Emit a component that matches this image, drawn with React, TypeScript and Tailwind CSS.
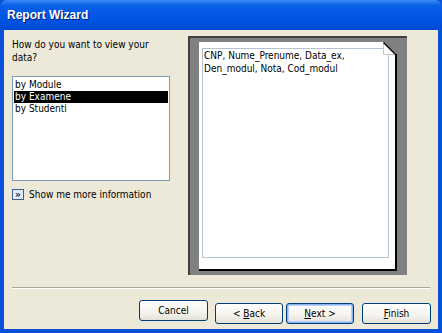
import React from 'react'

const font = { fontFamily: '"DejaVu Sans Condensed", "Liberation Sans", Arial, sans-serif' }

function WizButton({ children, isDefault, w }: { children: React.ReactNode; isDefault?: boolean; w: string }) {
  return (
    <button
      className={
        'h-[21px] rounded-[3px] border border-[#003c74] bg-[linear-gradient(#ffffff,#f4f3ee_60%,#e3e1d6)] text-[10px] text-black ' +
        w +
        (isDefault ? ' shadow-[inset_0_0_0_1px_#8cb4f2,inset_0_0_0_2px_#b9d1fa]' : '')
      }
    >
      {children}
    </button>
  )
}

export default function App() {
  return (
    <div className="w-[442px] h-[333px] flex flex-col bg-[#0a50d8] overflow-hidden" style={font}>
      {/* title bar */}
      <div className="h-[30px] shrink-0 flex items-center pl-[7px] rounded-t-[7px] bg-[linear-gradient(#3a8cf6,#0a5fe8_18%,#0055e5_60%,#0049d6)]">
        <span className="text-white font-bold text-[12px] [text-shadow:1px_1px_0_#0a1f70]" style={{ fontFamily: '"Liberation Sans", Arial, sans-serif' }}>
          Report Wizard
        </span>
      </div>

      {/* body */}
      <div className="flex-1 mx-[4px] mb-[4px] bg-[#ece9d8] flex flex-col">
        <div className="flex pt-[6px]">
          {/* left column */}
          <div className="w-[176px] pl-[8px] flex flex-col">
            <p className="text-[10px] leading-[13px] text-black mt-[2px] w-[150px]">How do you want to view your data?</p>
            <div className="mt-[12px] w-[158px] h-[105px] border border-[#7f9db9] bg-white px-[1px] pt-[2px] text-[10px] leading-[12px] text-black">
              <div className="pl-[1px]">by Module</div>
              <div className="pl-[1px] bg-black text-white">by Examene</div>
              <div className="pl-[1px]">by Studenti</div>
            </div>
            <div className="mt-[6px] flex items-center gap-[5px] text-[10px] text-black">
              <span className="w-[12px] h-[11px] border border-[#3d5f8f] bg-[#e4ecf7] flex items-center justify-center text-[10px] leading-none font-bold text-[#1d2f5e]">»</span>
              <span>Show me more information</span>
            </div>
          </div>

          {/* preview */}
          <div className="ml-[8px] w-[219px] h-[239px] bg-[#808080] border-t-2 border-l-2 border-[#404040] pl-[9px] pt-[4px]">
            <div className="relative w-[198px] h-[229px] bg-white border-r-2 border-b-2 border-black pl-[3px] pt-[6px]">
              <div className="w-[187px] h-[210px] border border-[#b4c3d6] px-[1px] text-[10px] leading-[13px] text-black">
                CNP, Nume_Prenume, Data_ex, Den_modul, Nota, Cod_modul
              </div>
              <svg className="absolute right-[-2px] top-0" width="14" height="14" viewBox="0 0 14 14">
                <polygon points="0,0 14,0 14,14" fill="#808080" />
                <polygon points="0.5,0.5 0.5,12.5 12.5,12.5" fill="#ffffff" stroke="#c8c8c8" strokeWidth="1" />
                <line x1="0.5" y1="0.5" x2="12.5" y2="12.5" stroke="#000" strokeWidth="1.3" />
                <line x1="13" y1="12" x2="13" y2="14" stroke="#000" strokeWidth="2" />
              </svg>
            </div>
          </div>
        </div>

        {/* separator */}
        <div className="mx-[8px] mt-[12px] h-[2px] border-t border-[#aca899] border-b border-b-white" />

        {/* buttons */}
        <div className="flex justify-end pr-[7px] mt-[11px]">
          <WizButton w="w-[69px]">Cancel</WizButton>
          <div className="ml-[7px]">
            <WizButton w="w-[68px]">&lt; <u>B</u>ack</WizButton>
          </div>
          <div className="ml-[3px]">
            <WizButton w="w-[68px]" isDefault>
              <u>N</u>ext &gt;
            </WizButton>
          </div>
          <div className="ml-[8px]">
            <WizButton w="w-[69px]">
              <u>F</u>inish
            </WizButton>
          </div>
        </div>
      </div>
    </div>
  )
}
